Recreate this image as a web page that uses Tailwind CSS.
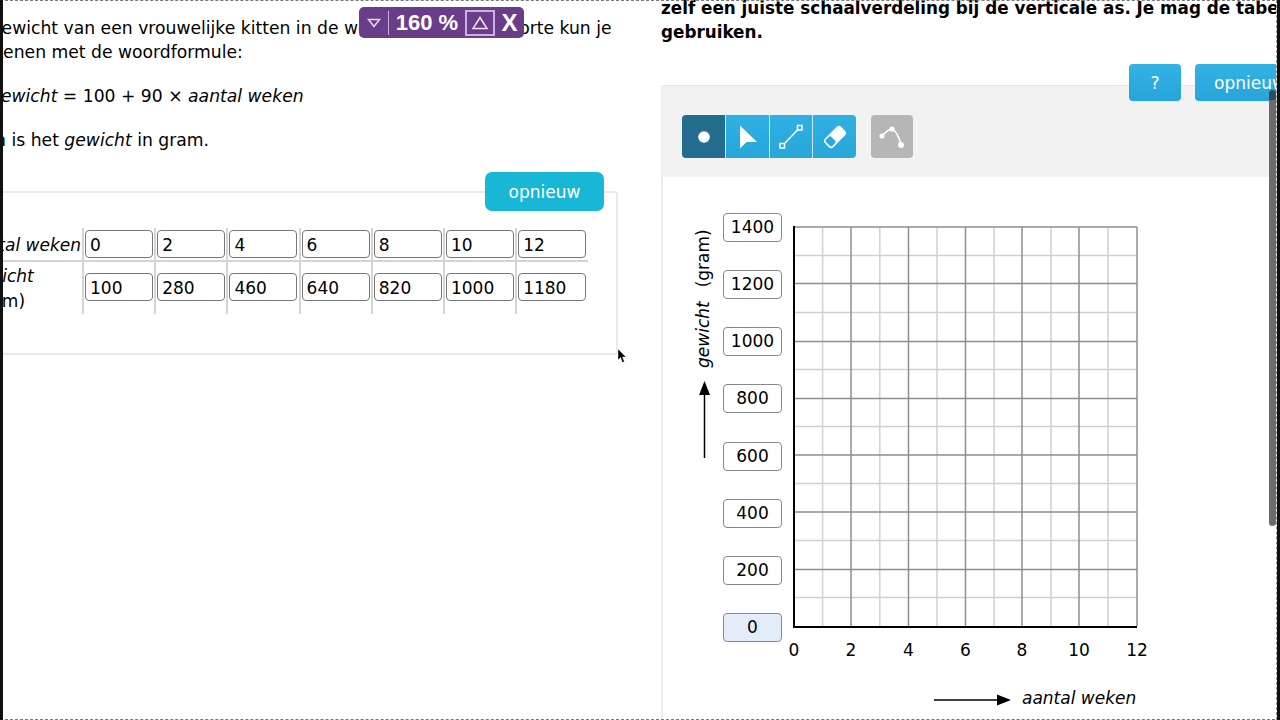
<!DOCTYPE html>
<html lang="nl">
  <head>
    <meta charset="UTF-8" />
    <title>Kitten gewicht</title>
    <script src="https://cdn.jsdelivr.net/npm/@tailwindcss/browser@4"></script>
  </head>
  <body class="bg-white text-black font-['DejaVu_Sans',sans-serif]">
    <div class="relative w-[1280px] h-[720px] overflow-hidden flex">
      <!-- left edge -->
      <div class="w-[3px] h-full bg-[#111] shrink-0 z-10"></div>

      <!-- left pane -->
      <div class="w-[658px] h-full overflow-hidden shrink-0">
        <div class="w-[720px] -ml-[48px] text-[17px] leading-[24px]">
          <div class="pt-[16px] w-[663px] text-[17.2px]">
            <p class="whitespace-nowrap">Het gewicht van een vrouwelijke kitten in de weken na haar geboorte kun je<br />berekenen met de woordformule:</p>
            <p class="mt-[20px] pl-[35px]"><i>gewicht</i> = 100 + 90 × <i>aantal weken</i></p>
            <p class="mt-[20px]">Hierin is het <i>gewicht</i> in gram.</p>
          </div>

          <div class="mt-[39px] w-[663px] h-[164px] border-2 border-[#eaeaea] rounded-[4px] relative">
            <button class="absolute -top-[21px] right-[12px] w-[119px] h-[39px] rounded-[7px] bg-[#17b7d5] text-white text-[17px]">opnieuw</button>
            <div class="mt-[35px] flex flex-col">
              <div class="flex h-[34px] border-b-2 border-[#d4d4d4] w-[631px]">
                <div class="w-[125px] pt-[5px] text-right pr-[1px] italic whitespace-nowrap">aantal weken</div>
                <div class="w-[72.2px] border-l-2 border-[#d4d4d4] pl-[1px] pt-[2px]"><div class="w-[68px] h-[28px] border border-[#777] rounded-[4px] pl-[4px] leading-[28px]">0</div></div>
                <div class="w-[72.2px] border-l-2 border-[#d4d4d4] pl-[1px] pt-[2px]"><div class="w-[68px] h-[28px] border border-[#777] rounded-[4px] pl-[4px] leading-[28px]">2</div></div>
                <div class="w-[72.2px] border-l-2 border-[#d4d4d4] pl-[1px] pt-[2px]"><div class="w-[68px] h-[28px] border border-[#777] rounded-[4px] pl-[4px] leading-[28px]">4</div></div>
                <div class="w-[72.2px] border-l-2 border-[#d4d4d4] pl-[1px] pt-[2px]"><div class="w-[68px] h-[28px] border border-[#777] rounded-[4px] pl-[4px] leading-[28px]">6</div></div>
                <div class="w-[72.2px] border-l-2 border-[#d4d4d4] pl-[1px] pt-[2px]"><div class="w-[68px] h-[28px] border border-[#777] rounded-[4px] pl-[4px] leading-[28px]">8</div></div>
                <div class="w-[72.2px] border-l-2 border-[#d4d4d4] pl-[1px] pt-[2px]"><div class="w-[68px] h-[28px] border border-[#777] rounded-[4px] pl-[4px] leading-[28px]">10</div></div>
                <div class="w-[72.2px] border-l-2 border-[#d4d4d4] pl-[1px] pt-[2px]"><div class="w-[68px] h-[28px] border border-[#777] rounded-[4px] pl-[4px] leading-[28px]">12</div></div>
              </div>
              <div class="flex h-[52px] w-[631px]">
                <div class="w-[125px] pl-[10px] pt-[2px] italic leading-[25px]">gewicht<br /><span class="not-italic">(gram)</span></div>
                <div class="w-[72.2px] border-l-2 border-[#d4d4d4] pl-[1px] pt-[11px]"><div class="w-[68px] h-[28px] border border-[#777] rounded-[4px] pl-[4px] leading-[28px]">100</div></div>
                <div class="w-[72.2px] border-l-2 border-[#d4d4d4] pl-[1px] pt-[11px]"><div class="w-[68px] h-[28px] border border-[#777] rounded-[4px] pl-[4px] leading-[28px]">280</div></div>
                <div class="w-[72.2px] border-l-2 border-[#d4d4d4] pl-[1px] pt-[11px]"><div class="w-[68px] h-[28px] border border-[#777] rounded-[4px] pl-[4px] leading-[28px]">460</div></div>
                <div class="w-[72.2px] border-l-2 border-[#d4d4d4] pl-[1px] pt-[11px]"><div class="w-[68px] h-[28px] border border-[#777] rounded-[4px] pl-[4px] leading-[28px]">640</div></div>
                <div class="w-[72.2px] border-l-2 border-[#d4d4d4] pl-[1px] pt-[11px]"><div class="w-[68px] h-[28px] border border-[#777] rounded-[4px] pl-[4px] leading-[28px]">820</div></div>
                <div class="w-[72.2px] border-l-2 border-[#d4d4d4] pl-[1px] pt-[11px]"><div class="w-[68px] h-[28px] border border-[#777] rounded-[4px] pl-[4px] leading-[28px] whitespace-nowrap">1000</div></div>
                <div class="w-[72.2px] border-l-2 border-[#d4d4d4] pl-[1px] pt-[11px]"><div class="w-[68px] h-[28px] border border-[#777] rounded-[4px] pl-[4px] leading-[28px] whitespace-nowrap">1180</div></div>
              </div>
            </div>
          </div>
        </div>
      </div>

      <!-- right pane -->
      <div class="relative flex-1 h-full overflow-hidden border-r border-dashed border-[#999]">
        <div class="font-bold text-[16.8px] leading-[24px] whitespace-nowrap -mt-[4px]">
          <p>zelf een juiste schaalverdeling bij de verticale as. Je mag de tabel</p>
          <p>gebruiken.</p>
        </div>

        <div class="absolute left-0 top-[85px] w-full bottom-0 border-l-2 border-[#eeeeee]">
          <div class="h-[92px] bg-[#f2f2f2] border-t border-[#e8e8e8] pt-[29px] pl-[19px] flex">
            <div class="flex h-[43px] rounded-[4px] overflow-hidden">
              <div class="w-[43px] bg-[#246d8f] flex items-center justify-center">
                <svg width="14" height="14" viewBox="0 0 14 14"><circle cx="7" cy="7" r="5.8" fill="#fff" /></svg>
              </div>
              <div class="w-[44px] border-l border-[#cdeaf7] bg-gradient-to-b from-[#2fb0e3] to-[#28a6da] flex items-center justify-center">
                <svg class="ml-[2px]" width="19" height="24" viewBox="0 0 19 24"><path d="M1 0.5 L18 17 L7.5 17 L1 23.5 Z" fill="#fff" /></svg>
              </div>
              <div class="w-[43px] border-l border-[#cdeaf7] bg-gradient-to-b from-[#2fb0e3] to-[#28a6da] flex items-center justify-center">
                <svg width="26" height="26" viewBox="0 0 26 26" fill="none" stroke="#fff" stroke-width="1.5"><rect x="19.5" y="1.5" width="4.5" height="4.5" /><rect x="2" y="19.5" width="4.5" height="4.5" /><path d="M6.5 19.5 L19.5 6" /></svg>
              </div>
              <div class="w-[44px] border-l border-[#cdeaf7] bg-gradient-to-b from-[#2fb0e3] to-[#28a6da] flex items-center justify-center">
                <svg width="24" height="24" viewBox="0 0 24 24"><g transform="rotate(-45 12 12)"><rect x="0.5" y="6" width="23" height="12" rx="3.5" fill="#fff" /><rect x="2" y="7.5" width="7.5" height="9" rx="2" fill="#2aa9dd" /></g></svg>
              </div>
            </div>
            <div class="ml-[15px] w-[42px] h-[43px] rounded-[4px] bg-[#b6b6b6] flex items-center justify-center">
              <svg width="30" height="28" viewBox="0 0 30 28" fill="none" stroke="#fff" stroke-width="1.6"><path d="M5 13 Q10 7 15 6 Q21 9 24 22" /><circle cx="5" cy="13" r="2.6" fill="#fff" stroke="none" /><circle cx="15" cy="6" r="2.6" fill="#fff" stroke="none" /><circle cx="24" cy="22" r="3" fill="#fff" stroke="none" /></svg>
            </div>
          </div>

          <!-- graph canvas -->
          <div class="relative h-[543px]">
            <svg class="absolute left-0 top-0" width="612" height="543" viewBox="663 177 612 543">
              <g stroke="#d0d0d0" stroke-width="1.5">
                <path d="M822.6 227V626M879.8 227V626M937 227V626M994 227V626M1051 227V626M1108 227V626" />
                <path d="M794 255.5H1137M794 312.5H1137M794 369.5H1137M794 426.5H1137M794 483.5H1137M794 540.5H1137M794 597.5H1137" />
              </g>
              <g stroke="#8e8e8e" stroke-width="1.5">
                <path d="M851 227V626M908.5 227V626M965.5 227V626M1022 227V626M1079 227V626M1137 227V626" />
                <path d="M794 227H1137M794 283.5H1137M794 341.5H1137M794 398.5H1137M794 455H1137M794 512H1137M794 569.5H1137" />
              </g>
              <path d="M794 226V627H1137" fill="none" stroke="#000" stroke-width="2" />
              <g font-size="17" text-anchor="middle" fill="#000">
                <text x="794" y="656">0</text>
                <text x="851" y="656">2</text>
                <text x="908.5" y="656">4</text>
                <text x="965.5" y="656">6</text>
                <text x="1022" y="656">8</text>
                <text x="1079" y="656">10</text>
                <text x="1137" y="656">12</text>
              </g>
              <path d="M704.5 458V392" stroke="#000" stroke-width="1.5" />
              <path d="M704.5 381L710 395H699Z" fill="#000" />
              <path d="M934 700H1000" stroke="#000" stroke-width="1.5" />
              <path d="M1011 700L997 694.5V705.5Z" fill="#000" />
              <text x="1022" y="704" font-size="17" font-style="italic" fill="#000">aantal weken</text>
              <text transform="translate(709 368) rotate(-90)" font-size="17" fill="#000"><tspan font-style="italic">gewicht</tspan><tspan dx="14">(gram)</tspan></text>
            </svg>
            <!-- scale boxes -->
            <div class="absolute left-[60px] top-[36px] h-[429px] flex flex-col justify-between text-[17px] text-center leading-[27px]">
              <div class="w-[59px] h-[29px] border border-[#888] rounded-[4px]">1400</div>
              <div class="w-[59px] h-[29px] border border-[#888] rounded-[4px]">1200</div>
              <div class="w-[59px] h-[29px] border border-[#888] rounded-[4px]">1000</div>
              <div class="w-[59px] h-[29px] border border-[#888] rounded-[4px]">800</div>
              <div class="w-[59px] h-[29px] border border-[#888] rounded-[4px]">600</div>
              <div class="w-[59px] h-[29px] border border-[#888] rounded-[4px]">400</div>
              <div class="w-[59px] h-[29px] border border-[#888] rounded-[4px]">200</div>
              <div class="w-[59px] h-[29px] border border-[#888] rounded-[4px] bg-[#e3ecf9]">0</div>
            </div>
          </div>
        </div>

        <!-- buttons over the panel -->
        <div class="absolute top-[64px] left-[468px] flex gap-[14px] text-white text-[17px]">
          <button class="w-[52px] h-[37px] pt-[2px] rounded-[4px] bg-gradient-to-b from-[#33b2e4] to-[#27a5da]">?</button>
          <button class="w-[110px] h-[37px] pt-[3px] rounded-[4px] bg-gradient-to-b from-[#33b2e4] to-[#27a5da]">opnieuw</button>
        </div>
        <!-- scrollbar -->
        <div class="absolute top-[90px] right-0 w-[7px] h-[436px] bg-[#6b6b6b] rounded-[4px] border-t-[10px] border-[#274f63]"></div>
      </div>

      <!-- right edge -->
      <div class="w-[3px] h-full bg-[#111] shrink-0 z-10"></div>

      <!-- recording frame -->
      <div class="absolute left-0 right-0 top-0 border-t border-dashed border-[#777]"></div>
      <div class="absolute left-0 right-0 bottom-0 border-t border-dashed border-[#777]"></div>

      <!-- zoom widget -->
      <div class="absolute left-[359px] top-[7px] w-[165px] h-[31px] rounded-[5px] bg-[#6a3d8a] text-white font-['Liberation_Sans',sans-serif] font-bold flex items-center">
        <div class="w-[30px] h-[24px] border-r border-[#c9b3d9] flex items-center justify-center">
          <svg width="14" height="10" viewBox="0 0 14 10" fill="none" stroke="#e4d8ee" stroke-width="1.5"><path d="M1.5 1.5H12.5L7 8.5Z" /></svg>
        </div>
        <div class="w-[76px] text-center text-[22px] leading-none whitespace-nowrap">160 %</div>
        <div class="w-[30px] h-[26px] border-2 border-[#c9b3d9] flex items-center justify-center">
          <svg width="16" height="14" viewBox="0 0 16 14" fill="none" stroke="#f0e8f5" stroke-width="1.5"><path d="M8 1.5L15 12.5H1Z" /></svg>
        </div>
        <div class="flex-1 text-center text-[24px] leading-none">X</div>
      </div>

      <!-- cursor -->
      <svg class="absolute left-[617px] top-[348px]" width="10" height="16" viewBox="0 0 10 16"><path d="M1 1V12L3.6 9.6L5.4 14.5L7.4 13.7L5.5 9H9Z" fill="#000" stroke="#fff" stroke-width="0.4" /></svg>
    </div>
  </body>
</html>
